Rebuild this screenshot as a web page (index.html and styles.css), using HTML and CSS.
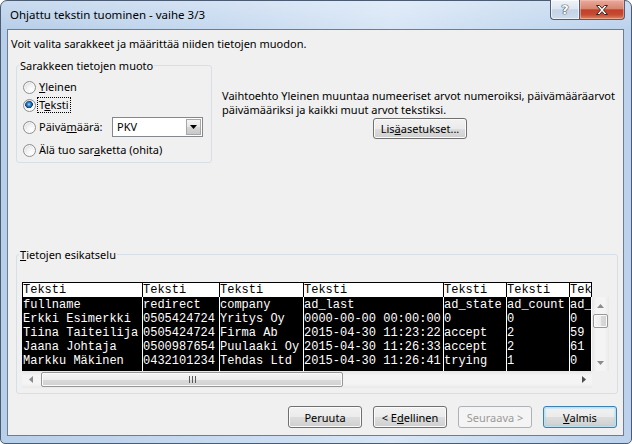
FILE: index.html
```html
<!DOCTYPE html>
<html lang="fi">
<head>
<meta charset="utf-8">
<title>Ohjattu tekstin tuominen - vaihe 3/3</title>
<link rel="stylesheet" href="styles.css">
</head>
<body>
<div class="window">
  <div class="titlebar">
    <span class="title">Ohjattu tekstin tuominen - vaihe 3/3</span>
    <div class="caption-buttons">
      <div class="cap-btn help"><span class="help-glyph">?</span></div>
      <div class="cap-btn close">
        <svg width="12" height="10" viewBox="0 0 12 10"><path d="M0.5 0.5h3l2.5 2.8 2.5-2.8h3l-4 4.5 4 4.5h-3l-2.5-2.8-2.5 2.8h-3l4-4.5z" fill="#fff" stroke="#43201a" stroke-width="1" stroke-linejoin="round"/></svg>
      </div>
    </div>
  </div>
  <div class="client">
    <p class="intro">Voit valita sarakkeet ja määrittää niiden tietojen muodon.</p>
    <div class="top">
      <div class="group format">
        <div class="group-title">Sarakkeen tietojen muoto</div>
        <div class="options">
          <div class="opt"><span class="radio"></span><span class="label"><u>Y</u>leinen</span></div>
          <div class="opt"><span class="radio checked"></span><span class="label focus">T<u>e</u>ksti</span></div>
          <div class="opt date">
            <span class="radio"></span><span class="label date-label">Päivä<u>m</u>äärä:</span>
            <div class="combo">
              <span class="combo-value">PKV</span>
              <span class="combo-btn"><svg width="7" height="4" viewBox="0 0 7 4"><path d="M0 0h7L3.5 4z" fill="#000"/></svg></span>
            </div>
          </div>
          <div class="opt"><span class="radio"></span><span class="label">Älä tuo sar<u>a</u>ketta (ohita)</span></div>
        </div>
      </div>
      <div class="info">
        <p class="desc">Vaihtoehto Yleinen muuntaa numeeriset arvot numeroiksi, päivämääräarvot<br>päivämääriksi ja kaikki muut arvot tekstiksi.</p>
        <button class="btn advanced">Lis<u>ä</u>asetukset...</button>
      </div>
    </div>
    <div class="group preview-group">
      <div class="group-title"><u>T</u>ietojen esikatselu</div>
      <div class="preview">
        <div class="table">
          <div class="col c1">
            <div class="h">Teksti</div>
            <div class="d"><span>fullname</span><span>Erkki Esimerkki</span><span>Tiina Taiteilija</span><span>Jaana Johtaja</span><span>Markku Mäkinen</span></div>
          </div>
          <div class="col c2">
            <div class="h">Teksti</div>
            <div class="d"><span>redirect</span><span>0505424724</span><span>0505424724</span><span>0500987654</span><span>0432101234</span></div>
          </div>
          <div class="col c3">
            <div class="h">Teksti</div>
            <div class="d"><span>company</span><span>Yritys Oy</span><span>Firma Ab</span><span>Puulaaki Oy</span><span>Tehdas Ltd</span></div>
          </div>
          <div class="col c4">
            <div class="h">Teksti</div>
            <div class="d"><span>ad_last</span><span>0000-00-00 00:00:00</span><span>2015-04-30 11:23:22</span><span>2015-04-30 11:26:33</span><span>2015-04-30 11:26:41</span></div>
          </div>
          <div class="col c5">
            <div class="h">Teksti</div>
            <div class="d"><span>ad_state</span><span>0</span><span>accept</span><span>accept</span><span>trying</span></div>
          </div>
          <div class="col c6">
            <div class="h">Teksti</div>
            <div class="d"><span>ad_count</span><span>0</span><span>2</span><span>2</span><span>1</span></div>
          </div>
          <div class="col c7">
            <div class="h">Teksti</div>
            <div class="d"><span>ad_views</span><span>0</span><span>59</span><span>61</span><span>0</span></div>
          </div>
        </div>
        <div class="vscroll">
          <div class="sb-arrow"><svg width="7" height="4" viewBox="0 0 7 4"><path d="M0 4L3.5 0 7 4z" fill="#8a8a8a"/></svg></div>
          <div class="v-track"><div class="v-thumb"></div></div>
          <div class="sb-arrow"><svg width="7" height="4" viewBox="0 0 7 4"><path d="M0 0h7L3.5 4z" fill="#8a8a8a"/></svg></div>
        </div>
        <div class="hscroll">
          <div class="sb-arrow"><svg width="4" height="7" viewBox="0 0 4 7"><path d="M4 0v7L0 3.5z" fill="#8a8a8a"/></svg></div>
          <div class="h-track">
            <div class="h-thumb"><svg width="7" height="7" viewBox="0 0 7 7"><path d="M0.5 0v7M3.5 0v7M6.5 0v7" stroke="#5a5a5a" stroke-width="1"/></svg></div>
          </div>
          <div class="sb-arrow"><svg width="4" height="7" viewBox="0 0 4 7"><path d="M0 0v7L4 3.5z" fill="#4d4d4d"/></svg></div>
        </div>
      </div>
    </div>
    <div class="actions">
      <button class="btn">Peruuta</button>
      <button class="btn">&lt; E<u>d</u>ellinen</button>
      <button class="btn" disabled>Seuraava &gt;</button>
      <button class="btn default"><u>V</u>almis</button>
    </div>
  </div>
</div>
</body>
</html>
```

FILE: styles.css
```css
* { box-sizing: border-box; }
html, body { margin: 0; padding: 0; }
body {
  width: 632px;
  height: 444px;
  overflow: hidden;
  background: #ffffff;
  font-family: "Noto Sans", "Open Sans", sans-serif;
  font-size: 11px;
  color: #000;
}

.window {
  width: 632px;
  height: 444px;
  display: flex;
  flex-direction: column;
  padding: 0 7px 7px 6px;
  border: 1px solid #4b5b72;
  border-radius: 7px 7px 5px 5px;
  background:
    linear-gradient(to bottom, rgba(255,255,255,0.25), rgba(255,255,255,0) 28px),
    linear-gradient(to right, #b8cfe9 0%, #c7daf0 35%, #d8e6f6 62%, #c9dcf1 80%, #bcd2ec 100%);
}

.titlebar {
  height: 28px;
  display: flex;
  align-items: flex-start;
  flex: none;
}
.title {
  padding-left: 3px;
  line-height: 28px;
  font-size: 11.5px;
}
.caption-buttons {
  margin-left: auto;
  margin-right: -1px;
  margin-top: -1px;
  display: flex;
}
.cap-btn {
  height: 20px;
  display: flex;
  align-items: center;
  justify-content: center;
  border: 1px solid #4f5e75;
  border-top: none;
}
.help {
  width: 29px;
  border-right: none;
  border-radius: 0 0 0 4px;
  background: linear-gradient(#eef3f9 0%, #dde6f1 45%, #c4d3e5 52%, #cddbeb 100%);
  box-shadow: inset 0 0 0 1px rgba(255,255,255,0.6);
}
.help-glyph {
  font-family: "DejaVu Sans", sans-serif;
  font-weight: bold;
  font-size: 13px;
  line-height: 13px;
  color: #fff;
  text-shadow: 0 0 1px #2d3a4d, 0 0 1px #2d3a4d, 0 0 1px #2d3a4d;
}
.close {
  width: 46px;
  border-radius: 0 0 4px 0;
  background: linear-gradient(#e8aa9d 0%, #d8866f 45%, #c2402b 52%, #c54b33 78%, #dc8a63 100%);
  box-shadow: inset 0 0 0 1px rgba(255,200,190,0.5);
}

.client {
  flex: 1;
  display: flex;
  flex-direction: column;
  background: #f0f0f0;
  border: 1px solid #6a7c96;
  padding: 6px 5px 7px 3px;
}

.intro {
  margin: 0;
  line-height: 16px;
}

.top {
  display: flex;
  align-items: flex-start;
  margin: 13px 0 0 5px;
}

.group {
  display: flex;
  flex-direction: column;
  border: 1px solid #d5dfe5;
  border-radius: 3px;
}
.group-title {
  align-self: flex-start;
  margin: -8px 0 0 2px;
  padding: 0 1px;
  line-height: 15px;
  background: #f0f0f0;
}

.format {
  width: 196px;
  height: 98px;
}
.options {
  display: flex;
  flex-direction: column;
  margin: 5px 0 0 6px;
}
.opt {
  display: flex;
  align-items: center;
  height: 18px;
}
.opt.date {
  height: 22px;
  margin: 2px 0 3px;
}
.radio {
  flex: none;
  width: 13px;
  height: 13px;
  border-radius: 50%;
  border: 1px solid #8e8f8f;
  background: radial-gradient(circle at 65% 70%, #ffffff 0%, #f1f1f1 45%, #cfcfcf 100%);
  box-shadow: inset 0 0 0 1px rgba(255,255,255,0.7);
}
.radio.checked {
  background:
    radial-gradient(circle at 45% 40%, #9fd9ff 0, #3a8fd8 1.5px, #114a8a 3.2px, #0d3a6e 3.6px, rgba(13,58,110,0) 4.1px),
    radial-gradient(circle at 65% 70%, #ffffff 0%, #f1f1f1 45%, #cfcfcf 100%);
}
.label {
  margin-left: 1px;
  padding: 0 1px;
  line-height: 14px;
  border: 1px solid transparent;
  white-space: nowrap;
}
.label.focus {
  border: 1px dotted #000;
}
.date-label {
  width: 75px;
}
.combo {
  display: flex;
  width: 91px;
  height: 20px;
  padding: 1px;
  border: 1px solid #828790;
  background: #fff;
}
.combo-value {
  flex: 1;
  padding-left: 3px;
  line-height: 16px;
}
.combo-btn {
  width: 15px;
  height: 16px;
  display: flex;
  align-items: center;
  justify-content: center;
  border: 1px solid #a7a7a7;
  background: linear-gradient(#f5f5f5 0%, #e6e6e6 50%, #d6d6d6 51%, #c9c9c9 100%);
}

.info {
  flex: 1;
  margin-left: 10px;
  display: flex;
  flex-direction: column;
  align-items: center;
}
.desc {
  align-self: stretch;
  margin: 24px 0 0;
  line-height: 14px;
}

.btn {
  width: 74px;
  height: 22px;
  padding: 0;
  font: inherit;
  color: #000;
  border: 1px solid #707070;
  border-radius: 3px;
  background: linear-gradient(#f2f2f2 0%, #ebebeb 50%, #dddddd 51%, #cfcfcf 100%);
  box-shadow: inset 0 0 0 1px #fbfbfb;
}
.btn.default {
  border-color: #3c7fb1;
  box-shadow: inset 0 0 0 1px #b5e3f8, inset 0 0 1px 2px rgba(150, 215, 245, 0.35);
}
.btn:disabled {
  color: #9a9a9a;
  border-color: #adb2b5;
  background: #f4f4f4;
  box-shadow: none;
}
.advanced {
  width: 94px;
  height: 21px;
  margin-top: 1px;
}

.preview-group {
  height: 140px;
  margin: 91px 0 0 5px;
}
.preview {
  display: grid;
  grid-template-columns: 570px 17px;
  grid-template-rows: 15px 74px 17px;
  margin: 20px 0 0 5px;
}
.table {
  grid-column: 1;
  grid-row: 1 / 3;
  display: flex;
  border-left: 1px solid #000;
  overflow: hidden;
  font-family: "Liberation Mono", "Courier New", monospace;
  font-size: 12px;
}
.col {
  flex: none;
  display: flex;
  flex-direction: column;
  overflow: hidden;
}
.c1 { width: 120px; }
.c2 { width: 77px; }
.c3 { width: 84px; }
.c4 { width: 140px; }
.c5 { width: 63px; }
.c6 { width: 63px; }
.c7 { width: 22px; }
.col .h {
  height: 15px;
  padding-top: 1px;
  line-height: 13px;
  overflow: hidden;
  white-space: pre;
  background: #fff;
  color: #000;
  border-top: 1px solid #000;
  border-right: 1px solid #000;
}
.col .d {
  flex: 1;
  padding-top: 1px;
  background: #000;
  color: #fff;
  border-right: 1px solid #fff;
}
.col .d span {
  display: block;
  height: 14px;
  line-height: 14px;
  white-space: pre;
  overflow: hidden;
}

.vscroll {
  grid-column: 2;
  grid-row: 2;
  display: flex;
  flex-direction: column;
  background: linear-gradient(to right, #e6e6e6, #f4f4f4 25%, #f4f4f4 75%, #e9e9e9);
}
.sb-arrow {
  flex: none;
  width: 17px;
  height: 17px;
  display: flex;
  align-items: center;
  justify-content: center;
}
.v-track {
  flex: 1;
  padding: 0 1px;
}
.v-thumb {
  height: 14px;
  border: 1px solid #979797;
  border-radius: 2px;
  background: linear-gradient(to right, #f5f5f5 0%, #ececec 50%, #dadada 51%, #d2d2d2 100%);
  box-shadow: inset 0 0 0 1px #fafafa;
}
.hscroll {
  grid-column: 1;
  grid-row: 3;
  display: flex;
  background: linear-gradient(#e6e6e6, #f4f4f4 25%, #f4f4f4 75%, #e9e9e9);
}
.h-track {
  flex: 1;
  padding: 1px 0 1px 2px;
}
.h-thumb {
  width: 302px;
  height: 15px;
  display: flex;
  align-items: center;
  justify-content: center;
  border: 1px solid #979797;
  border-radius: 2px;
  background: linear-gradient(#f5f5f5 0%, #ececec 50%, #dadada 51%, #d2d2d2 100%);
  box-shadow: inset 0 0 0 1px #fafafa;
}

.actions {
  display: flex;
  justify-content: flex-end;
  gap: 11px;
  margin: 12px 1px 0 0;
}
```
